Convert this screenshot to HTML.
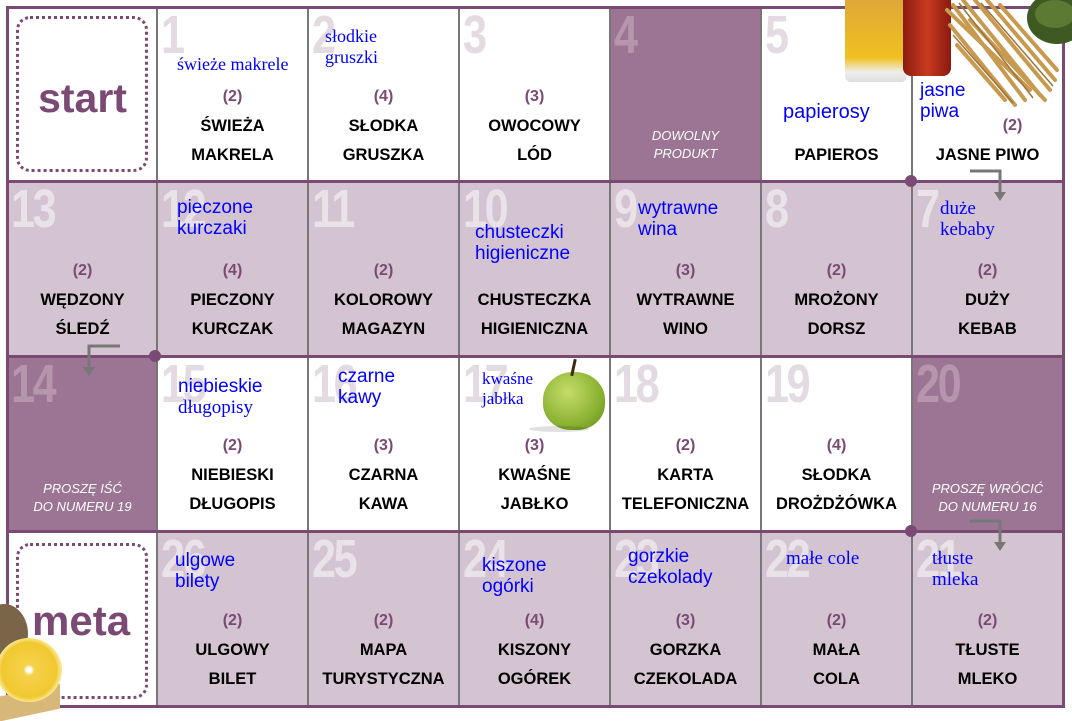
<!DOCTYPE html>
<html><head><meta charset="utf-8"><style>
*{margin:0;padding:0;box-sizing:border-box}
body{width:1072px;height:715px;background:#fff;position:relative;overflow:hidden;font-family:"Liberation Sans",sans-serif}
.c{position:absolute;width:151px;height:175px;overflow:hidden}
.w{background:#fff}.l{background:#d4c4d1}.d{background:#9d7594}
.n{position:absolute;left:4px;top:1px;font:bold 54px/1 "Liberation Sans",sans-serif;transform:scaleX(.8);transform-origin:left top;letter-spacing:-3px}
.w .n{color:#e4dbe2}.l .n{color:#e9e2e8}.d .n{color:#b596ad}
.q{position:absolute;left:0;width:100%;top:81px;text-align:center;color:#7b4a74;font-weight:bold;font-size:16px}
.t{position:absolute;left:0;width:100%;text-align:center;font-weight:bold;font-size:16.5px;color:#000;white-space:nowrap}
.t1{top:110px}.t2{top:139px}
.b{position:absolute;color:#0000ff;font-size:19px;line-height:21px;white-space:nowrap}
.s{font-family:"Liberation Serif",serif;font-size:19px}
.i{position:absolute;left:0;width:100%;text-align:center;color:#fff;font-style:italic;font-size:13px;line-height:18px}
.h{position:absolute;left:7px;width:1057px;height:3px;background:#7b4a74}
.v{position:absolute;top:7px;width:2px;height:700px;background:#777}
.dot{position:absolute;width:12px;height:12px;border-radius:50%;background:#7b4a74}
</style></head><body>

<!-- row1 -->
<div class="c w" style="left:7px;top:7px"><div style="position:absolute;left:9px;top:9px;width:132px;height:156px;border:3px dotted #7b4a74;border-radius:14px"></div><div style="position:absolute;left:0;width:100%;top:68px;text-align:center;color:#7b4a74;font-weight:bold;font-size:41px">start</div></div>
<div class="c w" style="left:157px;top:7px"><div class="n">1</div><div class="b s" style="left:20px;top:47px;font-size:18px">świeże makrele</div><div class="q">(2)</div><div class="t t1">ŚWIEŻA</div><div class="t t2">MAKRELA</div></div>
<div class="c w" style="left:308px;top:7px"><div class="n">2</div><div class="b s" style="left:17px;top:19px;font-size:18px">słodkie<br>gruszki</div><div class="q">(4)</div><div class="t t1">SŁODKA</div><div class="t t2">GRUSZKA</div></div>
<div class="c w" style="left:459px;top:7px"><div class="n">3</div><div class="q">(3)</div><div class="t t1">OWOCOWY</div><div class="t t2">LÓD</div></div>
<div class="c d" style="left:610px;top:7px"><div class="n">4</div><div class="i" style="top:120px">DOWOLNY<br>PRODUKT</div></div>
<div class="c w" style="left:761px;top:7px"><div class="n">5</div><div class="b" style="left:22px;top:95px;font-size:20px">papierosy</div><div class="t t2">PAPIEROS</div></div>
<div class="c w" style="left:912px;top:7px"><div class="b" style="left:8px;top:73px">jasne<br>piwa</div><div class="q" style="top:110px;left:25px">(2)</div><div class="t t2">JASNE PIWO</div></div>

<!-- row2 -->
<div class="c l" style="left:7px;top:181px"><div class="n">13</div><div class="q">(2)</div><div class="t t1">WĘDZONY</div><div class="t t2">ŚLEDŹ</div></div>
<div class="c l" style="left:157px;top:181px"><div class="n">12</div><div class="b" style="left:20px;top:16px">pieczone<br>kurczaki</div><div class="q">(4)</div><div class="t t1">PIECZONY</div><div class="t t2">KURCZAK</div></div>
<div class="c l" style="left:308px;top:181px"><div class="n">11</div><div class="q">(2)</div><div class="t t1">KOLOROWY</div><div class="t t2">MAGAZYN</div></div>
<div class="c l" style="left:459px;top:181px"><div class="n">10</div><div class="b" style="left:16px;top:41px">chusteczki<br>higieniczne</div><div class="t t1">CHUSTECZKA</div><div class="t t2">HIGIENICZNA</div></div>
<div class="c l" style="left:610px;top:181px"><div class="n">9</div><div class="b" style="left:28px;top:17px">wytrawne<br>wina</div><div class="q">(3)</div><div class="t t1">WYTRAWNE</div><div class="t t2">WINO</div></div>
<div class="c l" style="left:761px;top:181px"><div class="n">8</div><div class="q">(2)</div><div class="t t1">MROŻONY</div><div class="t t2">DORSZ</div></div>
<div class="c l" style="left:912px;top:181px"><div class="n">7</div><div class="b s" style="left:28px;top:17px">duże<br>kebaby</div><div class="q">(2)</div><div class="t t1">DUŻY</div><div class="t t2">KEBAB</div></div>

<!-- row3 -->
<div class="c d" style="left:7px;top:356px"><div class="n">14</div><div class="i" style="top:124px">PROSZĘ IŚĆ<br>DO NUMERU 19</div></div>
<div class="c w" style="left:157px;top:356px"><div class="n">15</div><div class="b" style="left:21px;top:20px">niebieskie<br><span class="s">długopisy</span></div><div class="q">(2)</div><div class="t t1">NIEBIESKI</div><div class="t t2">DŁUGOPIS</div></div>
<div class="c w" style="left:308px;top:356px"><div class="n">16</div><div class="b" style="left:30px;top:10px">czarne<br>kawy</div><div class="q">(3)</div><div class="t t1">CZARNA</div><div class="t t2">KAWA</div></div>
<div class="c w" style="left:459px;top:356px"><div class="n">17</div>
<div style="position:absolute;left:84px;top:16px;width:62px;height:58px;border-radius:48% 48% 45% 45%;background:radial-gradient(circle at 40% 35%,#c5dc6a,#8cb332 60%,#5f8a1c)"></div>
<div style="position:absolute;left:113px;top:3px;width:3px;height:17px;background:#3a2a10;transform:rotate(12deg)"></div>
<div style="position:absolute;left:70px;top:70px;width:60px;height:6px;border-radius:50%;background:rgba(0,0,0,.12)"></div>
<div class="b s" style="left:23px;top:13px;font-size:17px;line-height:20px">kwaśne<br>jabłka</div><div class="q">(3)</div><div class="t t1">KWAŚNE</div><div class="t t2">JABŁKO</div></div>
<div class="c w" style="left:610px;top:356px"><div class="n">18</div><div class="q">(2)</div><div class="t t1">KARTA</div><div class="t t2">TELEFONICZNA</div></div>
<div class="c w" style="left:761px;top:356px"><div class="n">19</div><div class="q">(4)</div><div class="t t1">SŁODKA</div><div class="t t2">DROŻDŻÓWKA</div></div>
<div class="c d" style="left:912px;top:356px"><div class="n">20</div><div class="i" style="top:124px">PROSZĘ WRÓCIĆ<br>DO NUMERU 16</div></div>

<!-- row4 -->
<div class="c w" style="left:7px;top:531px"><div style="position:absolute;left:9px;top:12px;width:132px;height:156px;border:3px dotted #7b4a74;border-radius:14px"></div><div style="position:absolute;left:25px;width:100%;top:66px;text-align:left;color:#7b4a74;font-weight:bold;font-size:42px">meta</div></div>
<div class="c l" style="left:157px;top:531px"><div class="n">26</div><div class="b" style="left:18px;top:19px">ulgowe<br>bilety</div><div class="q">(2)</div><div class="t t1">ULGOWY</div><div class="t t2">BILET</div></div>
<div class="c l" style="left:308px;top:531px"><div class="n">25</div><div class="q">(2)</div><div class="t t1">MAPA</div><div class="t t2">TURYSTYCZNA</div></div>
<div class="c l" style="left:459px;top:531px"><div class="n">24</div><div class="b" style="left:23px;top:24px">kiszone<br>ogórki</div><div class="q">(4)</div><div class="t t1">KISZONY</div><div class="t t2">OGÓREK</div></div>
<div class="c l" style="left:610px;top:531px"><div class="n">23</div><div class="b" style="left:18px;top:15px">gorzkie<br>czekolady</div><div class="q">(3)</div><div class="t t1">GORZKA</div><div class="t t2">CZEKOLADA</div></div>
<div class="c l" style="left:761px;top:531px"><div class="n">22</div><div class="b s" style="left:25px;top:17px">małe cole</div><div class="q">(2)</div><div class="t t1">MAŁA</div><div class="t t2">COLA</div></div>
<div class="c l" style="left:912px;top:531px"><div class="n">21</div><div class="b s" style="left:20px;top:17px">tłuste<br>mleka</div><div class="q">(2)</div><div class="t t1">TŁUSTE</div><div class="t t2">MLEKO</div></div>

<!-- lines -->
<div class="v" style="left:156px"></div><div class="v" style="left:307px"></div><div class="v" style="left:458px"></div><div class="v" style="left:609px"></div><div class="v" style="left:760px"></div><div class="v" style="left:911px"></div>
<div class="h" style="top:6px"></div><div class="h" style="top:180px"></div><div class="h" style="top:355px"></div><div class="h" style="top:530px"></div><div class="h" style="top:705px"></div>
<div style="position:absolute;left:6px;top:6px;width:3px;height:702px;background:#7b4a74"></div>
<div style="position:absolute;left:1062px;top:6px;width:3px;height:702px;background:#7b4a74"></div>
<div class="dot" style="left:905px;top:175px"></div><div class="dot" style="left:149px;top:350px"></div><div class="dot" style="left:905px;top:525px"></div>

<svg style="position:absolute;left:0;top:0" width="1072" height="715">
<g fill="none" stroke="#777" stroke-width="3"><path d="M970 171H1000V195"/><path d="M120 346H89V370"/><path d="M970 521H1000V545"/></g>
<g fill="#777"><path d="M994 192h12l-6 9z"/><path d="M83 367h12l-6 9z"/><path d="M994 542h12l-6 9z"/></g>
</svg>

<!-- beer & snacks -->
<div style="position:absolute;left:845px;top:0;width:62px;height:82px;background:linear-gradient(#e0a838,#f0c020 70%,#eee 88%,#ddd);border-radius:0 0 6px 6px"></div>
<div style="position:absolute;left:903px;top:0;width:48px;height:76px;background:linear-gradient(90deg,#8c1c10,#c83a20 50%,#8a1a10);border-radius:0 0 8px 8px"></div>
<svg style="position:absolute;left:945px;top:0" width="127" height="110">
<g stroke="#c89a50" stroke-width="4" stroke-linecap="round">
<path d="M8 5L80 100"/><path d="M18 0L95 95"/><path d="M5 25L70 105"/><path d="M30 0L105 90"/><path d="M12 45L60 100"/><path d="M42 0L110 80"/><path d="M55 5L112 70"/><path d="M2 10L85 90"/><path d="M25 20L100 100"/>
</g>
<g stroke="#9d7438" stroke-width="1.5"><path d="M14 3L88 98"/><path d="M36 3L108 86"/><path d="M8 35L68 103"/></g>
<ellipse cx="112" cy="18" rx="30" ry="26" fill="#3e5a22"/><ellipse cx="110" cy="14" rx="20" ry="14" fill="#5d7a34"/>
</svg>
<!-- bread & lemon -->
<div style="position:absolute;left:-20px;top:604px;width:48px;height:60px;border-radius:50%;background:#7a6548"></div>
<div style="position:absolute;left:0;top:690px;width:60px;height:25px;background:#d8b878;transform:skewY(-12deg)"></div>
<div style="position:absolute;left:-4px;top:638px;width:66px;height:64px;border-radius:50%;background:radial-gradient(circle,#fff 5%,#f6d24a 12%,#f0c830 60%,#fbe890 70%,#e8b820 80%)"></div>
</body></html>
